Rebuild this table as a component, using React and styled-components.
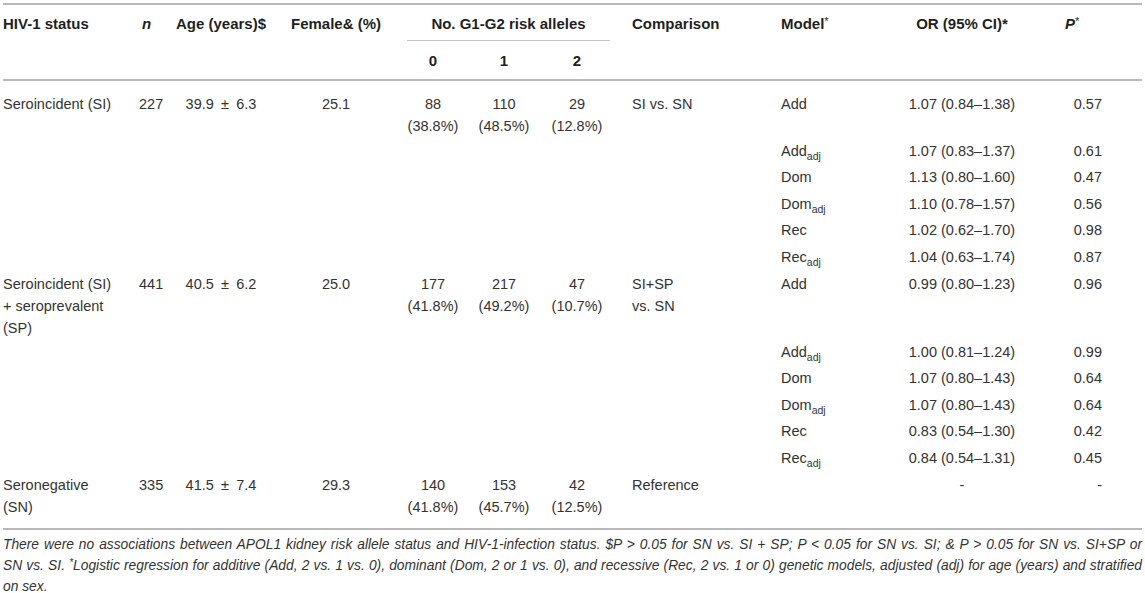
import React from 'react';
import styled, { createGlobalStyle } from 'styled-components';

const GlobalStyle = createGlobalStyle`
  html, body {
    margin: 0;
    padding: 0;
    background: #fff;
  }
  body {
    font-family: "Liberation Sans", Arial, sans-serif;
    color: #333;
  }
`;

const columns = [
  { width: 134, align: 'left', pl: 0, pr: 0 },
  { width: 31, align: 'left', pl: 2, pr: 0 },
  { width: 106, align: 'center', pl: 0, pr: 0 },
  { width: 124, align: 'center', pl: 0, pr: 0 },
  { width: 70, align: 'center', pl: 0, pr: 0 },
  { width: 72, align: 'center', pl: 0, pr: 0 },
  { width: 74, align: 'center', pl: 0, pr: 0 },
  { width: 166, align: 'left', pl: 18, pr: 0 },
  { width: 100, align: 'left', pl: 1, pr: 0 },
  { width: 164, align: 'center', pl: 0, pr: 0 },
  { width: 98, align: 'right', pl: 0, pr: 40 },
];

// en spaces around ± like the typeset original
const groups = [
  {
    status: ['Seroincident (SI)'],
    n: '227',
    age: '39.9\u2002±\u20026.3',
    female: '25.1',
    alleles: [['88', '(38.8%)'], ['110', '(48.5%)'], ['29', '(12.8%)']],
    comparison: ['SI vs. SN'],
    models: [
      ['Add', false, '1.07 (0.84–1.38)', '0.57'],
      ['Add', true, '1.07 (0.83–1.37)', '0.61'],
      ['Dom', false, '1.13 (0.80–1.60)', '0.47'],
      ['Dom', true, '1.10 (0.78–1.57)', '0.56'],
      ['Rec', false, '1.02 (0.62–1.70)', '0.98'],
      ['Rec', true, '1.04 (0.63–1.74)', '0.87'],
    ],
  },
  {
    status: ['Seroincident (SI)', '+ seroprevalent', '(SP)'],
    n: '441',
    age: '40.5\u2002±\u20026.2',
    female: '25.0',
    alleles: [['177', '(41.8%)'], ['217', '(49.2%)'], ['47', '(10.7%)']],
    comparison: ['SI+SP', 'vs. SN'],
    models: [
      ['Add', false, '0.99 (0.80–1.23)', '0.96'],
      ['Add', true, '1.00 (0.81–1.24)', '0.99'],
      ['Dom', false, '1.07 (0.80–1.43)', '0.64'],
      ['Dom', true, '1.07 (0.80–1.43)', '0.64'],
      ['Rec', false, '0.83 (0.54–1.30)', '0.42'],
      ['Rec', true, '0.84 (0.54–1.31)', '0.45'],
    ],
  },
  {
    status: ['Seronegative', '(SN)'],
    n: '335',
    age: '41.5\u2002±\u20027.4',
    female: '29.3',
    alleles: [['140', '(41.8%)'], ['153', '(45.7%)'], ['42', '(12.5%)']],
    comparison: ['Reference'],
    models: [['', false, '-', '-']],
  },
];

const Page = styled.div`
  padding: 3px 3px 0 3px;
  width: 1139px;
`;

const Table = styled.table`
  width: 1139px;
  table-layout: fixed;
  border-collapse: collapse;
  border-top: 2px solid #b9b9b9;
  border-bottom: 2px solid #b9b9b9;
  font-size: 14.5px;
  line-height: 22px;

  thead {
    border-bottom: 2px solid #b9b9b9;
  }

  tbody tr:first-child td {
    padding-top: 12px;
    padding-bottom: 2px;
  }

  tbody tr:last-child td {
    padding-bottom: 10px;
  }
`;

const Row = styled.tr`
  height: ${(p) => (p.$groupEnd ? 27.5 : 26.4)}px;
`;

const Th = styled.th`
  font-size: 15px;
  font-weight: bold;
  color: #1f1f1f;
  vertical-align: top;
  text-align: ${(p) => p.$align || 'left'};
  padding: ${(p) => (p.$second ? '9px 0 7px' : '8px 0 0')};
  padding-left: ${(p) => p.$pl || 0}px;
  white-space: nowrap;
`;

const GroupLabel = styled.div`
  margin: 0 4px 0 9px;
  padding-bottom: 5px;
  border-bottom: 1px solid #c4c4c4;
`;

const Td = styled.td`
  vertical-align: top;
  padding: 1px ${(p) => p.$pr}px 1px ${(p) => p.$pl}px;
  text-align: ${(p) => p.$align};
  white-space: nowrap;
  color: #333;
`;

const Sup = styled.sup`
  font-size: ${(p) => p.$size || 11}px;
  font-weight: normal;
  vertical-align: 4px;
  line-height: 0;
`;

const Sub = styled.sub`
  font-size: 10.5px;
  vertical-align: -4px;
  line-height: 0;
`;

const Note = styled.div`
  font-size: 13.8px;
  line-height: 21px;
  font-style: italic;
  color: #333;
  padding-top: 4px;
`;

const NoteLine = styled.div`
  white-space: nowrap;
  text-align: ${(p) => (p.$justify ? 'justify' : 'left')};
  text-align-last: ${(p) => (p.$justify ? 'justify' : 'left')};
`;

const Lines = ({ items }) =>
  items.map((t, i) => (
    <React.Fragment key={i}>
      {i > 0 && <br />}
      {t}
    </React.Fragment>
  ));

const cell = (i, content) => {
  const c = columns[i];
  return (
    <Td key={i} $align={c.align} $pl={c.pl} $pr={c.pr}>
      {content}
    </Td>
  );
};

const ModelName = ({ name, adj }) => (
  <>
    {name}
    {adj && <Sub>adj</Sub>}
  </>
);

const App = () => {
  const bodyRows = [];
  groups.forEach((g, gi) => {
    g.models.forEach((m, mi) => {
      const first = mi === 0;
      const groupEnd = mi === g.models.length - 1 && gi < groups.length - 1;
      bodyRows.push(
        <Row key={`${gi}-${mi}`} $groupEnd={groupEnd}>
          {cell(0, first && <Lines items={g.status} />)}
          {cell(1, first && g.n)}
          {cell(2, first && g.age)}
          {cell(3, first && g.female)}
          {g.alleles.map((a, ai) => cell(4 + ai, first && <Lines items={a} />))}
          {cell(7, first && <Lines items={g.comparison} />)}
          {cell(8, <ModelName name={m[0]} adj={m[1]} />)}
          {cell(9, m[2])}
          {cell(10, m[3])}
        </Row>
      );
    });
  });

  return (
    <Page>
      <GlobalStyle />
      <Table>
        <colgroup>
          {columns.map((c, i) => (
            <col key={i} style={{ width: c.width }} />
          ))}
        </colgroup>
        <thead>
          <tr>
            <Th rowSpan={2}>HIV-1 status</Th>
            <Th rowSpan={2} $pl={5}>
              <i>n</i>
            </Th>
            <Th rowSpan={2} $align="center">Age (years)$</Th>
            <Th rowSpan={2} $align="center">Female&amp; (%)</Th>
            <Th colSpan={3} $align="center">
              <GroupLabel>No. G1-G2 risk alleles</GroupLabel>
            </Th>
            <Th rowSpan={2} $pl={18}>Comparison</Th>
            <Th rowSpan={2} $pl={1}>
              Model<Sup>*</Sup>
            </Th>
            <Th rowSpan={2} $align="center">OR (95% CI)*</Th>
            <Th rowSpan={2} $pl={21}>
              <i>P</i>
              <Sup>*</Sup>
            </Th>
          </tr>
          <tr>
            <Th $second $align="center">0</Th>
            <Th $second $align="center">1</Th>
            <Th $second $align="center">2</Th>
          </tr>
        </thead>
        <tbody>{bodyRows}</tbody>
      </Table>
      <Note>
        <NoteLine $justify>
          There were no associations between APOL1 kidney risk allele status and HIV-1-infection
          status. $P &gt; 0.05 for SN vs. SI + SP; P &lt; 0.05 for SN vs. SI; &amp; P &gt; 0.05 for
          SN vs. SI+SP or
        </NoteLine>
        <NoteLine $justify>
          SN vs. SI. <Sup $size={10}>*</Sup>Logistic regression for additive (Add, 2 vs. 1 vs. 0),
          dominant (Dom, 2 or 1 vs. 0), and recessive (Rec, 2 vs. 1 or 0) genetic models, adjusted
          (adj) for age (years) and stratified
        </NoteLine>
        <NoteLine>on sex.</NoteLine>
      </Note>
    </Page>
  );
};

export default App;
